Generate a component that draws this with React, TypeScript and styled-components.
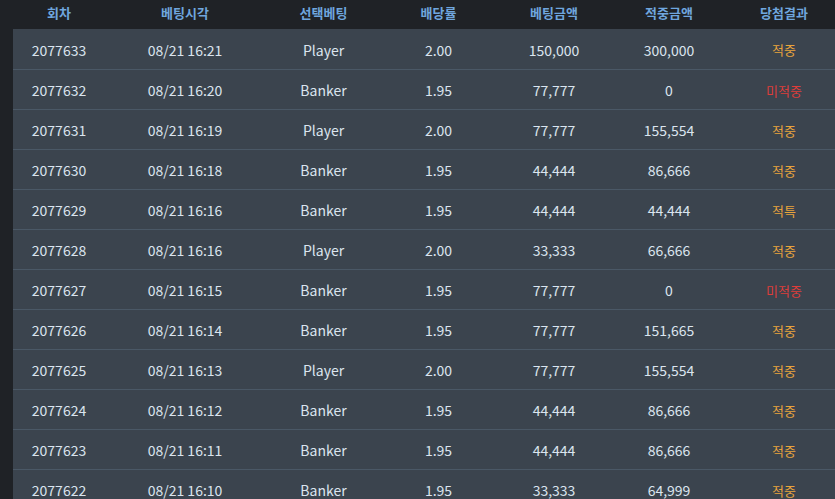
import React from "react";
import styled, { createGlobalStyle } from "styled-components";

const Global = createGlobalStyle`
  html, body { margin: 0; padding: 0; background: #1f2226; overflow: hidden; }
  body { font-family: "Noto Sans", "Noto Sans CJK KR", sans-serif; }
`;

const COLS = ["134px", "143px", "87px", "144px", "86px", "144px"].join(" ");

const Page = styled.div`
  width: 856px;
  background: #1f2226;
`;

const HeaderRow = styled.div`
  display: grid;
  grid-template-columns: 118px ${COLS};
  height: 29px;
  align-items: center;
`;

const HeadCell = styled.div`
  text-align: center;
  color: #6fa6de;
  font-family: "Noto Sans CJK KR", sans-serif;
  font-weight: 700;
  font-size: 13px;
  line-height: 26px;
  padding-bottom: 3px;
`;

const Body = styled.div`
  margin-left: 13px;
  background: #3b444e;
`;

const Row = styled.div`
  display: grid;
  grid-template-columns: 105px ${COLS};
  height: 40px;
  align-items: center;
  border-top: 1px solid #4a5866;
  &:first-child { border-top: none; }
  box-sizing: border-box;
`;

const Cell = styled.div<{ $inset?: number }>`
  text-align: center;
  color: #dbe5ef;
  font-family: "Noto Sans CJK KR", sans-serif;
  font-size: 14px;
  padding-top: 1px;
  padding-right: ${(p) => p.$inset ?? 0}px;
`;

const Result = styled.div<{ $win: boolean }>`
  text-align: center;
  color: ${(p) => (p.$win ? "#e9a43c" : "#dd3d3a")};
  font-family: "Noto Sans CJK KR", sans-serif;
  font-size: 13px;
  padding-top: 1px;
`;

const headers = ["회차", "베팅시각", "선택베팅", "배당률", "베팅금액", "적중금액", "당첨결과"];

const rows: [string, string, string, string, string, string, string][] = [
  ["2077633", "08/21 16:21", "Player", "2.00", "150,000", "300,000", "적중"],
  ["2077632", "08/21 16:20", "Banker", "1.95", "77,777", "0", "미적중"],
  ["2077631", "08/21 16:19", "Player", "2.00", "77,777", "155,554", "적중"],
  ["2077630", "08/21 16:18", "Banker", "1.95", "44,444", "86,666", "적중"],
  ["2077629", "08/21 16:16", "Banker", "1.95", "44,444", "44,444", "적특"],
  ["2077628", "08/21 16:16", "Player", "2.00", "33,333", "66,666", "적중"],
  ["2077627", "08/21 16:15", "Banker", "1.95", "77,777", "0", "미적중"],
  ["2077626", "08/21 16:14", "Banker", "1.95", "77,777", "151,665", "적중"],
  ["2077625", "08/21 16:13", "Player", "2.00", "77,777", "155,554", "적중"],
  ["2077624", "08/21 16:12", "Banker", "1.95", "44,444", "86,666", "적중"],
  ["2077623", "08/21 16:11", "Banker", "1.95", "44,444", "86,666", "적중"],
  ["2077622", "08/21 16:10", "Banker", "1.95", "33,333", "64,999", "적중"],
];

export default function App() {
  return (
    <Page>
      <Global />
      <HeaderRow>
        {headers.map((h) => (
          <HeadCell key={h}>{h}</HeadCell>
        ))}
      </HeaderRow>
      <Body>
        {rows.map((r) => (
          <Row key={r[0]}>
            {r.slice(0, 6).map((c, i) => (
              <Cell key={i} $inset={i === 0 ? 13 : 0}>
                {c}
              </Cell>
            ))}
            <Result $win={r[6] !== "미적중"}>{r[6]}</Result>
          </Row>
        ))}
      </Body>
    </Page>
  );
}
